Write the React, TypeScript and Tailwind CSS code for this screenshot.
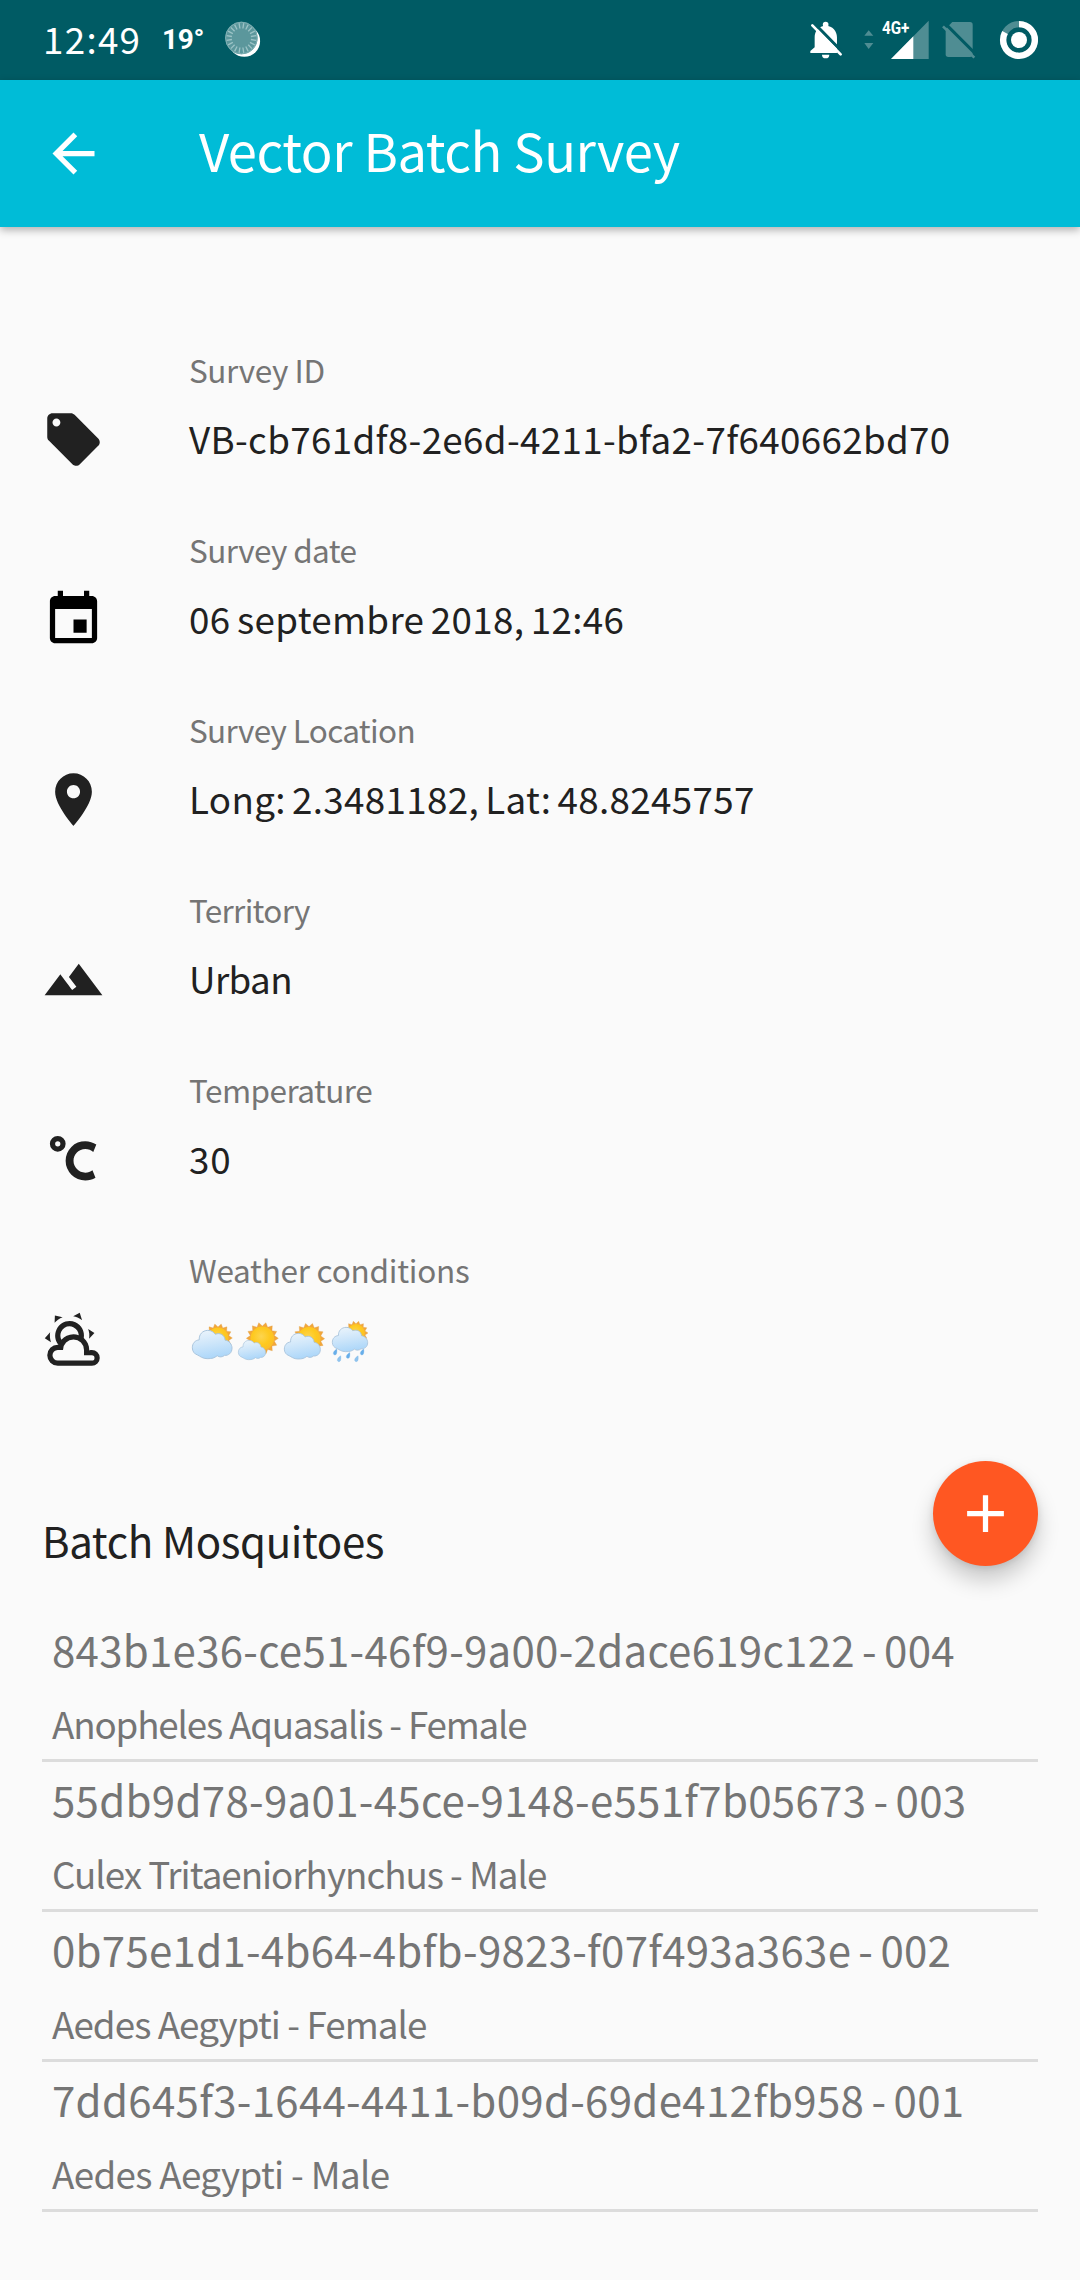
import React from "react";

const MUTED = "#4f8d93";

const survey = [
  {
    label: "Survey ID",
    labelCls: "tracking-[-0.4px]",
    value: "VB-cb761df8-2e6d-4211-bfa2-7f640662bd70",
    valueCls: "tracking-[0.34px]",
    icon: "M21.41 11.58l-9-9C12.05 2.22 11.55 2 11 2H4c-1.1 0-2 .9-2 2v7c0 .55.22 1.05.59 1.42l9 9c.36.36.86.58 1.41.58.55 0 1.05-.22 1.41-.59l7-7c.37-.36.59-.86.59-1.41 0-.55-.23-1.06-.59-1.42zM5.5 7C4.67 7 4 6.33 4 5.5S4.67 4 5.5 4 7 4.67 7 5.5 6.33 7 5.5 7z",
    iconCls: "fill-[#212121]",
  },
  {
    label: "Survey date",
    labelCls: "tracking-[-0.6px]",
    value: "06 septembre 2018, 12:46",
    valueCls: "tracking-[0.33px] [word-spacing:-2px]",
    icon: "M17 12h-5v5h5v-5zM16 1v2H8V1H6v2H5c-1.11 0-1.99.9-1.99 2L3 19c0 1.1.89 2 2 2h14c1.1 0 2-.9 2-2V5c0-1.1-.9-2-2-2h-1V1h-2zm3 18H5V8h14v11z",
    iconCls: "fill-black",
  },
  {
    label: "Survey Location",
    labelCls: "tracking-[-0.67px]",
    value: "Long: 2.3481182, Lat: 48.8245757",
    valueCls: "tracking-[0.33px] [word-spacing:-2.3px]",
    icon: "M12 2C8.13 2 5 5.13 5 9c0 5.25 7 13 7 13s7-7.75 7-13c0-3.87-3.13-7-7-7zm0 9.5c-1.38 0-2.5-1.12-2.5-2.5s1.12-2.5 2.5-2.5 2.5 1.12 2.5 2.5-1.12 2.5-2.5 2.5z",
    iconCls: "fill-[#212121]",
  },
  {
    label: "Territory",
    labelCls: "tracking-[-0.7px]",
    value: "Urban",
    valueCls: "tracking-[-0.6px]",
    icon: "M14 6l-3.75 5 2.85 3.8-1.6 1.2C9.81 13.75 7 10 7 10l-6 8h22L14 6z",
    iconCls: "fill-[#212121]",
  },
  {
    label: "Temperature",
    labelCls: "tracking-[-0.55px]",
    value: "30",
    valueCls: "tracking-[0.9px]",
    icon: "M16.5,5C18.05,5 19.5,5.47 20.69,6.28L19.53,9.17C18.73,8.44 17.67,8 16.5,8C14,8 12,10 12,12.5C12,15 14,17 16.5,17C17.53,17 18.47,16.66 19.23,16.08L20.37,18.93C19.24,19.61 17.92,20 16.5,20A7.5,7.5 0 0,1 9,12.5A7.5,7.5 0 0,1 16.5,5M6,3A3,3 0 0,1 9,6A3,3 0 0,1 6,9A3,3 0 0,1 3,6A3,3 0 0,1 6,3M6,5A1,1 0 0,0 5,6A1,1 0 0,0 6,7A1,1 0 0,0 7,6A1,1 0 0,0 6,5Z",
    iconCls: "fill-[#212121]",
  },
  {
    label: "Weather conditions",
    labelCls: "tracking-[-0.25px]",
    value: null,
    valueCls: "",
    icon: "M12.74,5.47C15.1,6.5 16.35,9.03 15.92,11.46C17.19,12.56 18,14.19 18,16V16.17C18.31,16.06 18.65,16 19,16A3,3 0 0,1 22,19A3,3 0 0,1 19,22H6A4,4 0 0,1 2,18A4,4 0 0,1 6,14H6.27C5,12.45 4.6,10.24 5.5,8.26C6.72,5.5 9.97,4.24 12.74,5.47M11.93,7.3C10.16,6.5 8.09,7.31 7.31,9.07C6.85,10.09 6.93,11.22 7.41,12.13C8.5,10.83 10.16,10 12,10C12.7,10 13.38,10.12 14,10.34C13.94,9.06 13.18,7.86 11.93,7.3M13.55,3.64C13,3.4 12.45,3.23 11.88,3.12L14.37,1.82L15.27,4.71C14.76,4.29 14.19,3.93 13.55,3.64M6.09,4.44C5.6,4.79 5.17,5.19 4.8,5.63L4.91,2.82L7.87,3.5C7.25,3.71 6.65,4.03 6.09,4.44M18,9.71C17.91,9.12 17.78,8.55 17.59,8L19.97,9.5L17.92,11.73C18.03,11.08 18.05,10.4 18,9.71M3.04,11.3C3.11,11.9 3.24,12.47 3.43,13L1.06,11.5L3.1,9.28C3,9.93 2.97,10.61 3.04,11.3M19,18H16V16A4,4 0 0,0 12,12A4,4 0 0,0 8,16H6A2,2 0 0,0 4,18A2,2 0 0,0 6,20H19A1,1 0 0,0 20,19A1,1 0 0,0 19,18Z",
    iconCls: "fill-[#212121]",
  },
];

const batches = [
  { id: "843b1e36-ce51-46f9-9a00-2dace619c122 - 004", idCls: "tracking-[0.28px]", kind: "Anopheles Aquasalis - Female", kindCls: "tracking-[-1.17px]" },
  { id: "55db9d78-9a01-45ce-9148-e551f7b05673 - 003", idCls: "tracking-[0.31px]", kind: "Culex Tritaeniorhynchus - Male", kindCls: "tracking-[-1.02px]" },
  { id: "0b75e1d1-4b64-4bfb-9823-f07f493a363e - 002", idCls: "tracking-[0.28px]", kind: "Aedes Aegypti - Female", kindCls: "tracking-[-0.93px]" },
  { id: "7dd645f3-1644-4411-b09d-69de412fb958 - 001", idCls: "tracking-[0.31px]", kind: "Aedes Aegypti - Male", kindCls: "tracking-[-0.66px]" },
];

function sunPoints(cx: number, cy: number, outer: number) {
  const pts: string[] = [];
  for (let i = 0; i < 28; i++) {
    const r = i % 2 === 1 ? outer : outer * 0.77;
    const a = ((i * 360) / 28 - 90) * (Math.PI / 180);
    pts.push(`${(cx + r * Math.cos(a)).toFixed(1)},${(cy + r * Math.sin(a)).toFixed(1)}`);
  }
  return pts.join(" ");
}

function Sun({ cx, cy, r }: { cx: number; cy: number; r: number }) {
  return (
    <g>
      <polygon points={sunPoints(cx, cy, r)} fill="#f2a63a" stroke="#dfa04a" strokeWidth="1" />
      <circle cx={cx} cy={cy} r={r * 0.74} fill="url(#sunFill)" />
    </g>
  );
}

/* Cloud drawn in a 121 x 86 box. */
function Cloud({ x, y, w, h }: { x: number; y: number; w: number; h: number }) {
  return (
    <path
      transform={`translate(${x} ${y}) scale(${w / 121} ${h / 86})`}
      d="M16 75C6 72 0 63 0 53 0 40 8 30 21 29 20 12 31 1 47 0 57 0 65 5 70 12 84 6 99 14 100 30 112 31 121 42 121 54 121 69 110 77 98 76 92 82 81 82 76 77 66 84 62 86 45 86 32 86 24 79 16 75Z"
      fill="url(#cloudFill)"
      stroke="#a9c4dc"
      strokeWidth="3"
    />
  );
}

function WeatherEmojis() {
  const drops = [
    [495, 187, "#67aeea"],
    [534, 197, "#67aeea"],
    [576, 187, "#67aeea"],
    [507, 207, "#90c4ee"],
    [559, 207, "#90c4ee"],
  ] as const;
  return (
    <svg className="block h-[46px] w-[184px]" viewBox="57 90 552 138">
      <defs>
        <radialGradient id="sunFill" cx="0.45" cy="0.42" r="0.6">
          <stop offset="0" stopColor="#fdd54f" />
          <stop offset="0.6" stopColor="#fec91f" />
          <stop offset="1" stopColor="#fbbd2b" />
        </radialGradient>
        <linearGradient id="cloudFill" x1="0.35" y1="0" x2="0.6" y2="1">
          <stop offset="0" stopColor="#e9f3fb" />
          <stop offset="0.45" stopColor="#cee6fa" />
          <stop offset="1" stopColor="#a9d5f9" />
        </linearGradient>
      </defs>
      <Sun cx={144} cy={144} r={43} />
      <Cloud x={67} y={121} w={119} h={85} />
      <Sun cx={277} cy={145} r={48} />
      <Cloud x={205} y={151} w={82} h={58} />
      <Sun cx={417} cy={146} r={47} />
      <Cloud x={343} y={130} w={108} h={77} />
      <Sun cx={558} cy={129} r={36} />
      <Cloud x={487} y={112} w={106} h={73} />
      {drops.map(([x, y, c]) => (
        <path
          key={`${x}-${y}`}
          transform={`translate(${x} ${y}) scale(0.88)`}
          d="M6 -11C7 -3 7 9 0 9 -8 9 -9 -2 6 -11Z"
          fill={c}
          stroke="#6fb0e6"
          strokeWidth="1"
        />
      ))}
    </svg>
  );
}

function LoaderGlyph() {
  const ticks = Array.from({ length: 20 }, (_, i) => i * 18);
  return (
    <svg className="h-[38px] w-[38px]" viewBox="0 0 38 38">
      <circle cx="20.3" cy="21" r="15.8" fill="#fff" />
      <circle cx="17.4" cy="18" r="16.2" fill="#5b979c" />
      {ticks.map((a) => (
        <path key={a} d="M17.4 3V8.4" stroke="#9cc3c6" strokeWidth="1.3" transform={`rotate(${a + 9} 17.4 18)`} />
      ))}
      <circle cx="17.4" cy="18" r="15.8" fill="none" stroke="#7fb0b4" strokeWidth="1" />
    </svg>
  );
}

function StatusBar() {
  return (
    <div className="flex h-[80px] items-start bg-[#005b64] text-white">
      <div className="ml-[43px] mt-[16px] w-[98px] whitespace-nowrap text-[36.75px] leading-[44px] tracking-[1.3px]">12:49</div>
      <div className="ml-[21px] mt-[22px] w-[42px] whitespace-nowrap font-['Roboto'] text-[28px] font-bold leading-[36px] tracking-[-0.3px]">
        19°
      </div>
      <div className="ml-[20px] mt-[20px]">
        <LoaderGlyph />
      </div>
      <div className="ml-auto mt-[20px] flex h-[40px] items-start pr-[41px]">
        <svg className="h-[40px] w-[33.3px]" viewBox="90 60 100 120">
          <circle cx="137" cy="74" r="8.5" fill="#fff" />
          <path d="M104 142V112C104 92 117 77 137 77 158 77 171 93 171 112V159H91V153Z" fill="#fff" />
          <path d="M100 67L194 163V180" fill="none" stroke="#005b64" strokeWidth="9" />
          <path d="M97 76L182 163" stroke="#fff" strokeWidth="8" strokeLinecap="round" />
          <path d="M126 164H148A11 11 0 0 1 126 164Z" fill="#fff" />
        </svg>
        <svg className="ml-[21px] h-[40px] w-[11px]" viewBox="253 60 33 120">
          <path d="M254 107L267 91 281 107ZM254 129H281L267 147Z" fill={MUTED} />
        </svg>
        <div className="ml-[6.4px] flex h-[40px] w-[47px] items-start">
          <div className="w-0 whitespace-nowrap">
            <div className="relative -top-[1px] origin-left scale-x-[0.8] font-['Roboto'] text-[19px] font-bold leading-[18px]">
              4G+
            </div>
          </div>
          <svg className="ml-[9px] h-[40px] w-[38px]" viewBox="332 60 114 120">
            <path d="M332 177L445 62V177Z" fill={MUTED} />
            <path d="M332 177L399 109V177Z" fill="#fff" />
          </svg>
        </div>
        <svg className="ml-[12.7px] h-[40px] w-[36px]" viewBox="484 60 108 120">
          <path d="M498 86L518 66H571Q579 66 579 74V163Q579 171 571 171H506Q498 171 498 163Z" fill={MUTED} />
          <path d="M494 68L602 176" stroke="#005b64" strokeWidth="9" />
          <path d="M490 79L584 173" stroke={MUTED} strokeWidth="8" strokeLinecap="butt" />
        </svg>
        <svg className="ml-[21.7px] h-[40px] w-[40px]" viewBox="657 60 120 120">
          <circle cx="717" cy="120" r="47.5" fill="none" stroke={MUTED} strokeWidth="19" />
          <path d="M717 72.5A47.5 47.5 0 1 1 675.1 97.7" fill="none" stroke="#fff" strokeWidth="19" />
          <circle cx="717" cy="120" r="24" fill="#fff" />
        </svg>
      </div>
    </div>
  );
}

export default function App() {
  return (
    <div className="flex h-[2280px] w-[1080px] flex-col overflow-hidden bg-[#fafafa] font-['Noto_Sans_CJK_SC','Noto_Sans',sans-serif] text-[#212121]">
      <StatusBar />
      <header className="flex h-[147px] shrink-0 items-center bg-[#00bcd7] pl-[42px] text-white shadow-[0_3px_8px_rgba(0,0,0,0.3)]">
        <svg className="h-[63px] w-[63px] fill-white" viewBox="0 0 24 24">
          <path d="M20 11H7.83l5.59-5.59L12 4l-8 8 8 8 1.41-1.41L7.83 13H20v-2z" />
        </svg>
        <h1 className="ml-[94px] whitespace-nowrap pb-[10px] text-[52.5px] leading-[60px] tracking-[-0.45px]">
          Vector Batch Survey
        </h1>
      </header>

      <main className="pt-[113px]">
        {survey.map((row) => (
          <section key={row.label} className="flex h-[180px] pl-[42px]">
            <svg className={`mt-[68px] h-[63px] w-[63px] shrink-0 ${row.iconCls}`} viewBox="0 0 24 24">
              <path d={row.icon} />
            </svg>
            <div className="ml-[84px] whitespace-nowrap pt-[7px]">
              <div className={`text-[31.5px] leading-[44px] text-[#757575] ${row.labelCls}`}>{row.label}</div>
              {row.value ? (
                <div className={`mt-[22px] text-[36.75px] leading-[50px] ${row.valueCls}`}>{row.value}</div>
              ) : (
                <div className="mt-[29px]">
                  <WeatherEmojis />
                </div>
              )}
            </div>
          </section>
        ))}

        <div className="flex h-[192px] items-start justify-between px-[42px] pt-[41px]">
          <h2 className="mt-[49px] whitespace-nowrap text-[42px] leading-[60px] tracking-[-0.37px]">Batch Mosquitoes</h2>
          <button className="flex h-[105px] w-[105px] items-center justify-center rounded-full bg-[#ff5722] shadow-[0_14px_22px_rgba(0,0,0,0.2),0_2px_7px_rgba(0,0,0,0.1)]">
            <svg className="h-[63px] w-[63px] fill-white" viewBox="0 0 24 24">
              <path d="M19 13h-6v6h-2v-6H5v-2h6V5h2v6h6v2z" />
            </svg>
          </button>
        </div>

        <ul className="mx-[42px]">
          {batches.map((b) => (
            <li key={b.id} className="h-[150px] whitespace-nowrap border-b-[3px] border-[#dcdcdc] pl-[10px] pt-[7px] text-[#757575]">
              <div className={`text-[42px] leading-[60px] [word-spacing:-2.5px] ${b.idCls}`}>{b.id}</div>
              <div className={`mt-[18px] text-[36.75px] leading-[52px] ${b.kindCls}`}>{b.kind}</div>
            </li>
          ))}
        </ul>
      </main>
    </div>
  );
}
